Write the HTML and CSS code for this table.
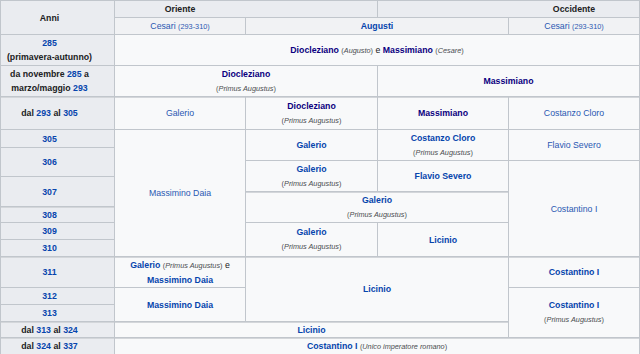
FILE: index.html
```html
<!DOCTYPE html>
<html lang="it">
<head>
<meta charset="utf-8">
<title>Tetrarchia</title>
<link rel="stylesheet" href="styles.css">
</head>
<body>
<div class="wikitable">
  <div class="c th yr r1-3 c1">Anni</div>
  <div class="c th r1-2 c2-4 left-head">Oriente</div>
  <div class="c th r1-2 c4-6 right-head">Occidente</div>

  <div class="c sub r2-3 c2"><span><a class="n">Cesari</a> <small class="lk">(293-310)</small></span></div>
  <div class="c sub r2-3 c3-5"><a class="b">Augusti</a></div>
  <div class="c sub r2-3 c5"><span><a class="n">Cesari</a> <small class="lk">(293-310)</small></span></div>

  <div class="c th yr r3-4 c1"><a>285</a><span>(primavera-autunno)</span></div>
  <div class="c r3-4 c2-6"><span><a class="b v">Diocleziano</a> <small class="note">(<i>Augusto</i>)</small> e <a class="b v">Massimiano</a> <small class="note">(<i>Cesare</i>)</small></span></div>

  <div class="c th yr r4-5 c1"><span>da novembre <a>285</a> a</span><span>marzo/maggio <a>293</a></span></div>
  <div class="c r4-5 c2-4"><a class="b v">Diocleziano</a><small class="note">(<i>Primus Augustus</i>)</small></div>
  <div class="c r4-5 c4-6"><a class="b v">Massimiano</a></div>

  <div class="c th yr dt r5-6 c1"><span>dal <a>293</a> al <a>305</a></span></div>
  <div class="c dt r5-6 c2"><a class="n">Galerio</a></div>
  <div class="c dt r5-6 c3"><a class="b v">Diocleziano</a><small class="note">(<i>Primus Augustus</i>)</small></div>
  <div class="c dt r5-6 c4"><a class="b v">Massimiano</a></div>
  <div class="c dt r5-6 c5"><a class="n">Costanzo Cloro</a></div>

  <div class="c th yr r6-7 c1"><a>305</a></div>
  <div class="c th yr r7-9 c1"><a>306</a></div>
  <div class="c th yr r9-11 c1"><a>307</a></div>
  <div class="c th yr dt r11-12 c1"><a>308</a></div>
  <div class="c th yr r12-13 c1"><a>309</a></div>
  <div class="c th yr r13-14 c1"><a>310</a></div>

  <div class="c r6-14 c2"><a class="n">Massimino Daia</a></div>
  <div class="c r6-8 c3"><a class="b">Galerio</a></div>
  <div class="c r6-8 c4"><a class="b">Costanzo Cloro</a><small class="note">(<i>Primus Augustus</i>)</small></div>
  <div class="c r6-8 c5"><a class="n">Flavio Severo</a></div>
  <div class="c r8-10 c3"><a class="b">Galerio</a><small class="note">(<i>Primus Augustus</i>)</small></div>
  <div class="c r8-10 c4"><a class="b">Flavio Severo</a></div>
  <div class="c r8-14 c5"><a class="n">Costantino I</a></div>
  <div class="c dt r10-12 c3-5"><a class="b">Galerio</a><small class="note">(<i>Primus Augustus</i>)</small></div>
  <div class="c r12-14 c3"><a class="b">Galerio</a><small class="note">(<i>Primus Augustus</i>)</small></div>
  <div class="c r12-14 c4"><a class="b">Licinio</a></div>

  <div class="c th yr dt r14-15 c1"><a>311</a></div>
  <div class="c th yr r15-16 c1"><a>312</a></div>
  <div class="c th yr r16-17 c1"><a>313</a></div>
  <div class="c dt r14-15 c2"><span><a class="b">Galerio</a> <small class="note">(<i>Primus Augustus</i>)</small> e</span><a class="b">Massimino Daia</a></div>
  <div class="c r15-17 c2"><a class="b">Massimino Daia</a></div>
  <div class="c dt r14-17 c3-5"><a class="b">Licinio</a></div>
  <div class="c dt r14-15 c5"><a class="b">Costantino I</a></div>
  <div class="c r15-18 c5"><a class="b">Costantino I</a><small class="note">(<i>Primus Augustus</i>)</small></div>

  <div class="c th yr dt r17-18 c1"><span>dal <a>313</a> al <a>324</a></span></div>
  <div class="c dt r17-18 c2-5"><a class="b">Licinio</a></div>

  <div class="c th yr dt r18-19 c1"><span>dal <a>324</a> al <a>337</a></span></div>
  <div class="c dt r18-19 c2-6"><span><a class="b">Costantino I</a> <small class="note">(<i>Unico imperatore romano</i>)</small></span></div>
</div>
</body>
</html>
```

FILE: styles.css
```css
html, body {
  margin: 0;
  padding: 0;
  background: #ffffff;
}

.wikitable {
  display: grid;
  grid-template-columns: 113px 130px 131px 130px 130px;
  grid-template-rows: 16px 16px 30px 30px 32px 17px 12px 15px 14px 14px 15px 16px 16px 30px 16px 16px 15px 16px;
  gap: 1px;
  padding: 1px;
  width: max-content;
  background: #c1c6cc;
  font-family: "Liberation Sans", Arial, sans-serif;
  font-size: 8.75px;
  line-height: 14px;
  color: #202122;
}

.c {
  display: flex;
  flex-direction: column;
  align-items: center;
  justify-content: center;
  text-align: center;
  background: #f8f9fa;
  white-space: nowrap;
  overflow: hidden;
}

.th {
  background: #eaecf0;
  font-weight: bold;
}

.sub {
  background: #f1f2f4;
}

.yr {
  padding-right: 16px;
}

.left-head {
  padding-right: 132px;
}

.right-head {
  padding-left: 131px;
}

.dt {
  box-shadow: inset 0 1px 0 #d3d6da;
}

a {
  color: #0645ad;
  text-decoration: none;
}

a.b {
  font-weight: bold;
}

a.n {
  font-weight: normal;
  color: #2a58b2;
}

a.v {
  color: #0b0080;
}

small {
  font-size: 7.3px;
}

.note {
  color: #4a4d50;
  line-height: 15px;
}

.lk {
  color: #2a58b2;
}

/* rows */
.r1-2 { grid-row: 1 / 2; }
.r1-3 { grid-row: 1 / 3; }
.r2-3 { grid-row: 2 / 3; }
.r3-4 { grid-row: 3 / 4; }
.r4-5 { grid-row: 4 / 5; }
.r5-6 { grid-row: 5 / 6; }
.r6-7 { grid-row: 6 / 7; }
.r6-8 { grid-row: 6 / 8; }
.r6-14 { grid-row: 6 / 14; }
.r7-9 { grid-row: 7 / 9; }
.r8-10 { grid-row: 8 / 10; }
.r8-14 { grid-row: 8 / 14; }
.r9-11 { grid-row: 9 / 11; }
.r10-12 { grid-row: 10 / 12; }
.r11-12 { grid-row: 11 / 12; }
.r12-13 { grid-row: 12 / 13; }
.r12-14 { grid-row: 12 / 14; }
.r13-14 { grid-row: 13 / 14; }
.r14-15 { grid-row: 14 / 15; }
.r14-17 { grid-row: 14 / 17; }
.r15-16 { grid-row: 15 / 16; }
.r15-17 { grid-row: 15 / 17; }
.r15-18 { grid-row: 15 / 18; }
.r16-17 { grid-row: 16 / 17; }
.r17-18 { grid-row: 17 / 18; }
.r18-19 { grid-row: 18 / 19; }

/* columns */
.c1 { grid-column: 1 / 2; }
.c2 { grid-column: 2 / 3; }
.c3 { grid-column: 3 / 4; }
.c4 { grid-column: 4 / 5; }
.c5 { grid-column: 5 / 6; }
.c2-4 { grid-column: 2 / 4; }
.c2-5 { grid-column: 2 / 5; }
.c2-6 { grid-column: 2 / 6; }
.c3-5 { grid-column: 3 / 5; }
.c4-6 { grid-column: 4 / 6; }
```
